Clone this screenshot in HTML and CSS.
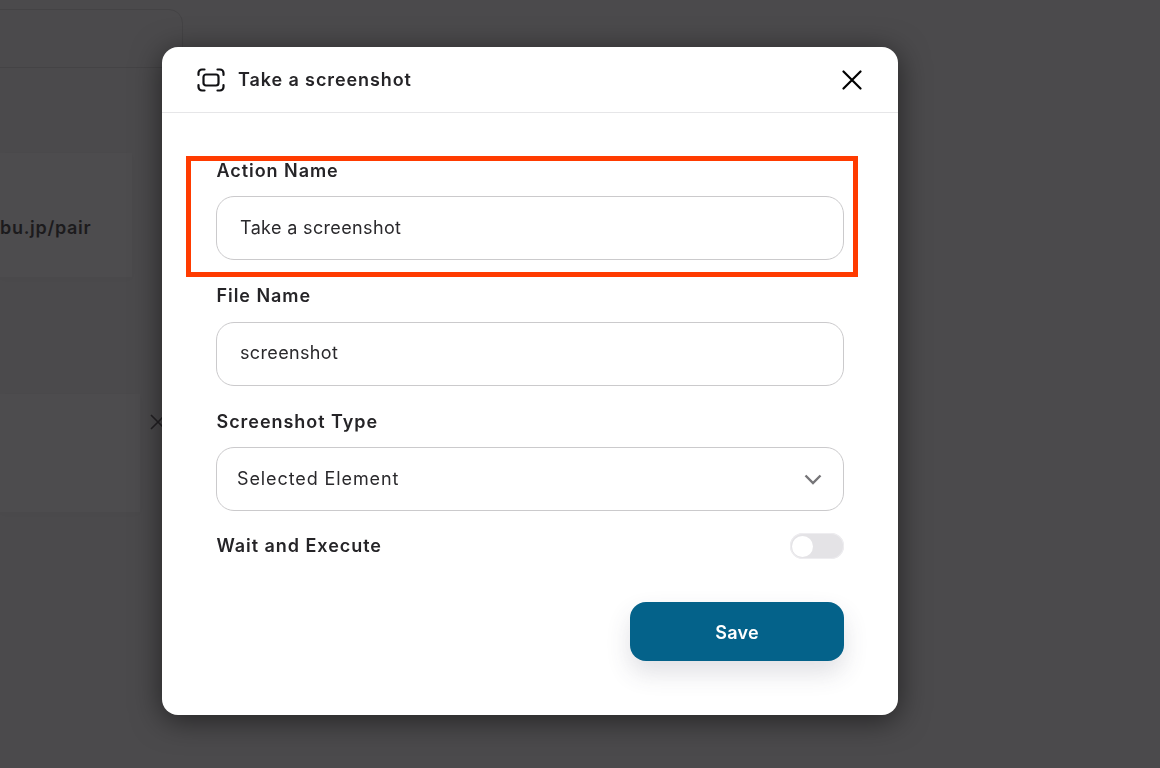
FILE: index.html
```html
<!DOCTYPE html>
<html lang="en">
<head>
<meta charset="utf-8">
<title>Take a screenshot</title>
<link rel="stylesheet" href="styles.css">
</head>
<body>
<div class="page">
  <div class="bg-search"></div>
  <div class="bg-card bg-url"><span class="bg-url-text">bu.jp/pair</span></div>
  <div class="bg-card bg-step">
    <svg class="bg-x" viewBox="0 0 16 16" width="16" height="16" fill="none" stroke="#232124" stroke-width="1.6"><path d="M1 1l14 14M15 1L1 15"/></svg>
  </div>
</div>
<div class="overlay">
  <section class="modal">
    <header class="modal-head">
      <div class="modal-title">
        <svg class="title-icon" viewBox="0 0 28 24" width="28" height="24" fill="none" stroke="#111114" stroke-width="2.200" stroke-linecap="round" stroke-linejoin="round">
          <path d="M1.500 7V5a3.500 3.500 0 0 1 3.500-3.500h2.500"/>
          <path d="M20.500 1.500H23A3.500 3.500 0 0 1 26.500 5v2"/>
          <path d="M1.500 17v2A3.500 3.500 0 0 0 5 22.500h2.500"/>
          <path d="M20.500 22.500H23a3.500 3.500 0 0 0 3.500-3.500v-2"/>
          <rect x="6.500" y="6.500" width="15" height="11" rx="2.500"/>
        </svg>
        <h1>Take a screenshot</h1>
      </div>
      <svg class="close" viewBox="0 0 20 20" width="20" height="20" fill="none" stroke="#000" stroke-width="2.200" stroke-linecap="round"><path d="M1.500 1.500l17 17M18.500 1.500l-17 17"/></svg>
    </header>
    <form class="modal-body">
      <div class="field field-action">
        <label class="label">Action Name</label>
        <div class="input">Take a screenshot</div>
        <div class="highlight"></div>
      </div>
      <div class="field field-file">
        <label class="label">File Name</label>
        <div class="input">screenshot</div>
      </div>
      <div class="field field-type">
        <label class="label">Screenshot Type</label>
        <div class="input select">
          <span>Selected Element</span>
          <svg class="chevron" viewBox="0 0 18 11" width="18" height="11" fill="none" stroke="#767578" stroke-width="2.400"><path d="M1.500 1.500L9 9l7.500-7.500"/></svg>
        </div>
      </div>
      <div class="toggle-row">
        <span class="label">Wait and Execute</span>
        <span class="toggle"><span class="knob"></span></span>
      </div>
      <div class="actions">
        <button class="save" type="button">Save</button>
      </div>
    </form>
  </section>
</div>
</body>
</html>
```
FILE: styles.css
```css
* { box-sizing: border-box; }
html, body { margin: 0; height: 100%; }
body {
  background: #4b4a4c;
  font-family: Inter, "Liberation Sans", sans-serif;
  color: #252427;
  overflow: hidden;
}
.page {
  height: 768px;
  padding-top: 9px;
  overflow: hidden;
}
.bg-search {
  width: 203px;
  height: 59px;
  margin-left: -20px;
  border: 1px solid #444345;
  border-radius: 14px;
}
.bg-card {
  background: #4d4c4e;
  box-shadow: 0 2px 8px rgba(0, 0, 0, .015);
}
.bg-url {
  width: 132px;
  height: 124px;
  margin-top: 85px;
  padding-top: 24px;
  display: flex;
  align-items: center;
}
.bg-url-text {
  font-size: 18px;
  font-weight: 600;
  letter-spacing: .7px;
  color: #1c1b1d;
}
.bg-step {
  width: 140px;
  height: 118px;
  margin-top: 117px;
  position: relative;
}
.bg-x {
  position: absolute;
  left: 150px;
  top: 20px;
}
.overlay {
  position: fixed;
  inset: 0;
  padding: 47px 0 0 162px;
}
.modal {
  width: 736px;
  height: 668px;
  background: #fff;
  border-radius: 16px;
  box-shadow: 0 5px 30px rgba(0, 0, 0, .55);
}
.modal-head {
  height: 66px;
  padding: 0 36px 0 35px;
  display: flex;
  align-items: center;
  justify-content: space-between;
  border-bottom: 1px solid #e6e6e8;
}
.modal-title {
  display: flex;
  align-items: center;
  gap: 13px;
}
.modal-title h1 {
  margin: 0;
  font-size: 18px;
  font-weight: 600;
  letter-spacing: .9px;
  color: #252427;
}
.modal-body {
  padding: 45px 54px 0 54.500px;
}
.field { position: relative; }
.field-action { margin-bottom: 23px; }
.field-file { margin-bottom: 23px; }
.field-file .input { margin-top: 13px; padding-bottom: 3px; }
.field-type { margin-bottom: 22px; }
.label {
  display: block;
  font-size: 18px;
  line-height: 26px;
  font-weight: 600;
  letter-spacing: .95px;
  color: #252427;
}
.input {
  height: 64px;
  margin: 12px 0 0 -.5px;
  padding: 0 23px 2px;
  display: flex;
  align-items: center;
  border: 1px solid #cbcacc;
  border-radius: 18px;
  background: #fff;
  font-size: 18px;
  letter-spacing: .35px;
  color: #2a292c;
}
.select {
  justify-content: space-between;
  padding: 0 21px 2px 20px;
  letter-spacing: .9px;
}
.chevron { margin-top: 2px; }
.highlight {
  position: absolute;
  left: -30.500px;
  top: -2px;
  width: 672px;
  height: 121px;
  border: 5px solid #ff3b00;
  pointer-events: none;
}
.toggle-row {
  display: flex;
  align-items: center;
  justify-content: space-between;
}
.toggle {
  width: 54px;
  height: 26px;
  padding: 3px 2px;
  border-radius: 13px;
  background: #e4e3e6;
  box-shadow: inset 0 0 0 1px #eeedf0;
}
.knob {
  display: block;
  width: 21px;
  height: 21px;
  border-radius: 50%;
  background: #fff;
}
.actions {
  display: flex;
  justify-content: flex-end;
  margin-top: 43px;
}
.save {
  width: 214px;
  height: 59px;
  padding-top: 2px;
  border: 0;
  border-radius: 16px;
  background: #04628a;
  color: #fff;
  font: 600 18px Inter, "Liberation Sans", sans-serif;
  letter-spacing: .25px;
  box-shadow: 0 12px 24px rgba(60, 60, 90, .16);
}
```
